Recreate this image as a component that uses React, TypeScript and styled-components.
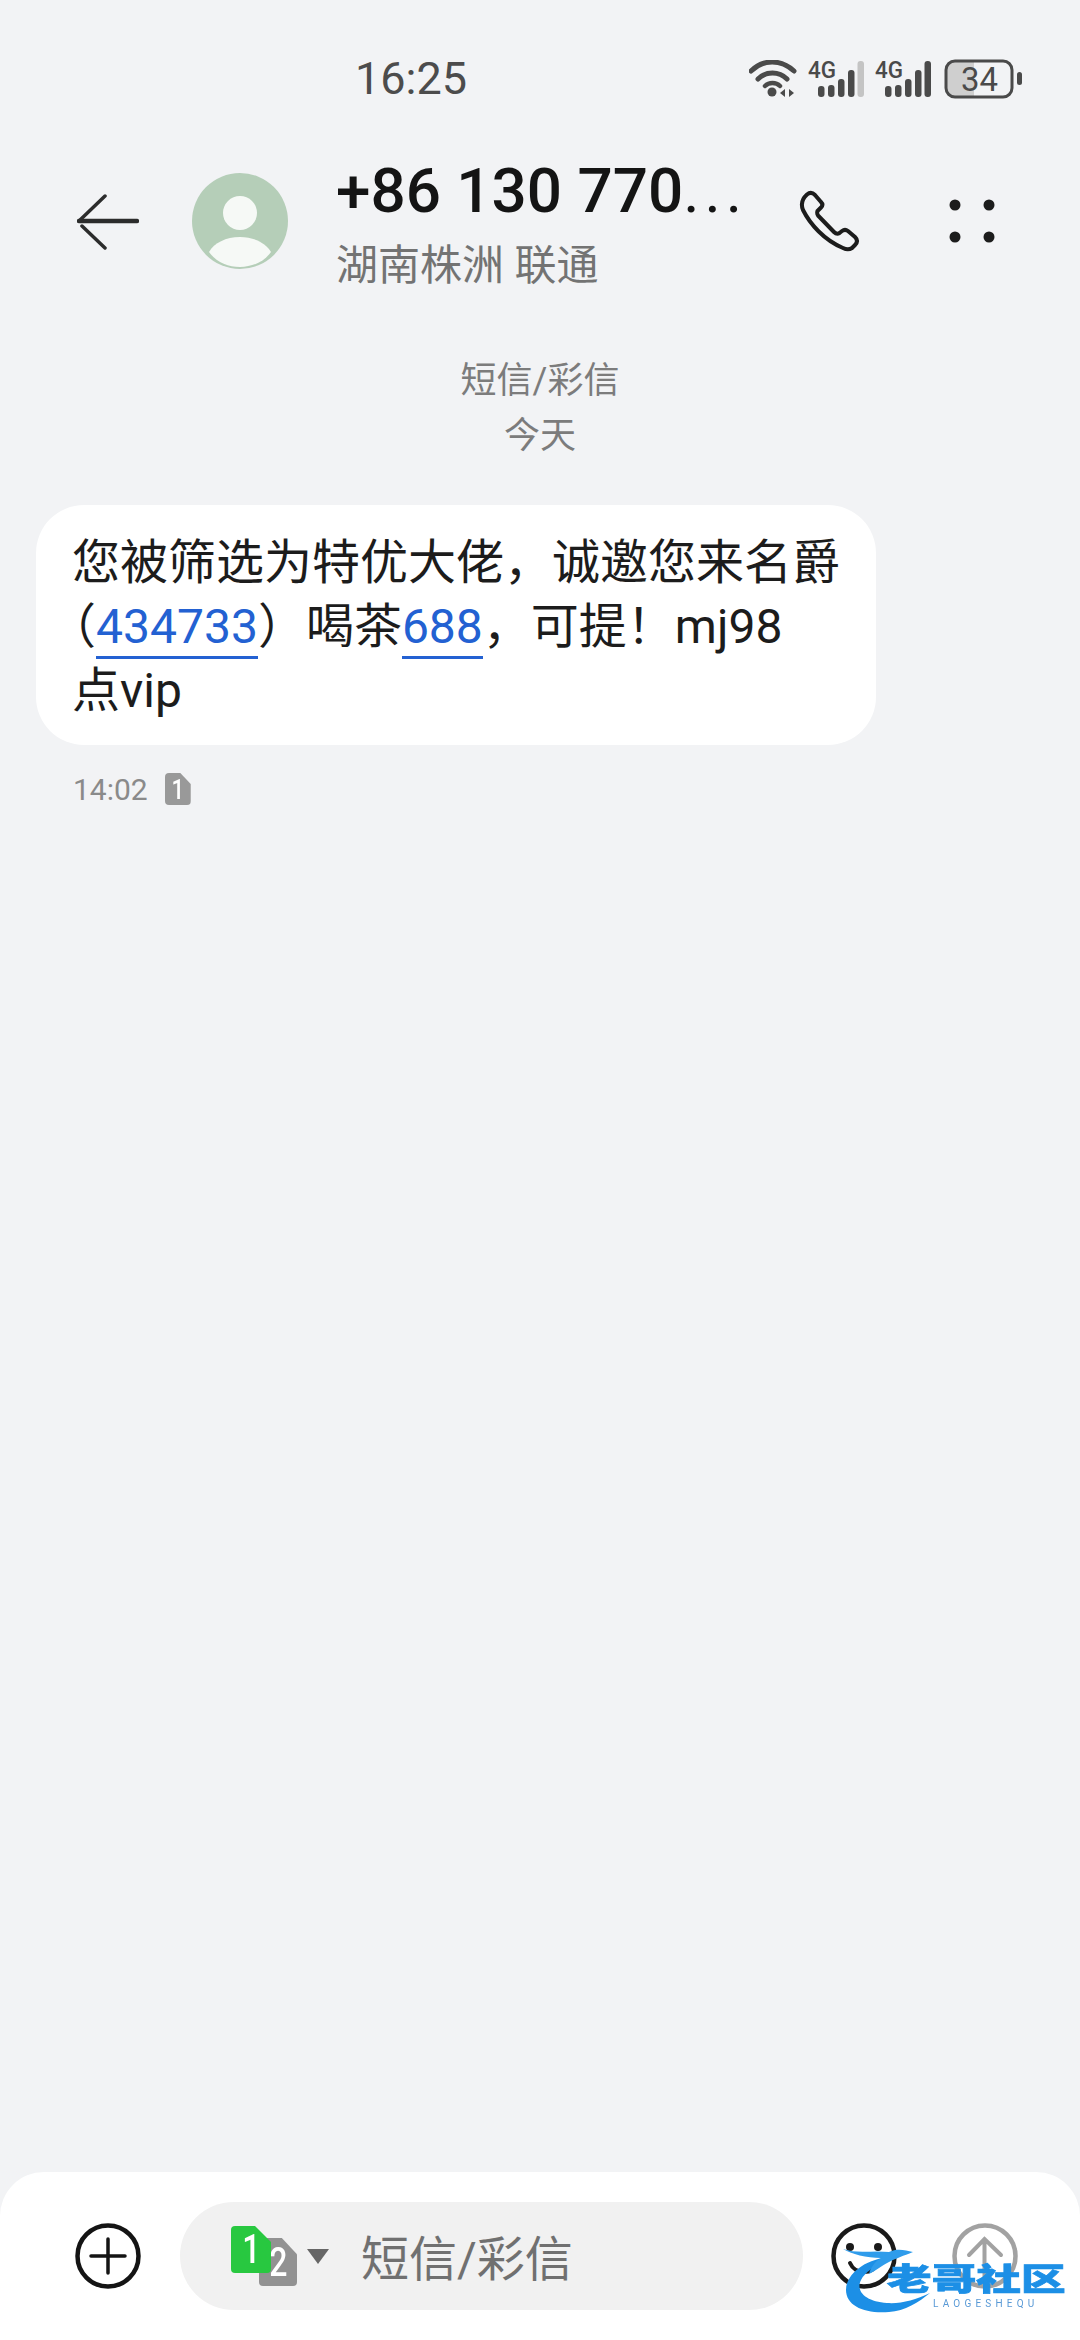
import styled, { createGlobalStyle } from "styled-components";

const GlobalStyle = createGlobalStyle`
  html, body {
    margin: 0;
    padding: 0;
    background: #f2f3f5;
  }
  * {
    box-sizing: border-box;
  }
`;

const FONT = `Roboto, "Noto Sans CJK SC", sans-serif`;

const S = {
  Page: styled.div`
    position: relative;
    width: 1080px;
    height: 2340px;
    display: flex;
    flex-direction: column;
    overflow: hidden;
    background: #f2f3f5;
    font-family: ${FONT};
  `,
  StatusBar: styled.div`
    height: 60px;
    margin-top: 49px;
    padding-left: 355px;
    display: flex;
    align-items: center;
    justify-content: space-between;
  `,
  Clock: styled.span`
    width: 112px;
    font-size: 45px;
    line-height: 60px;
    color: #4c4c4c;
  `,
  StatusIcons: styled.div`
    display: flex;
    align-items: center;
    margin-right: 58px;
    gap: 13px;
  `,
  SignalIcon: styled.svg`
    width: 56px;
    height: 56px;
    margin: -18px 0 0 -2px;
    flex: none;
  `,
  Header: styled.header`
    height: 96px;
    margin-top: 64px;
    padding-left: 77px;
    display: flex;
    align-items: center;
  `,
  BackIcon: styled.svg`
    width: 62px;
    height: 56px;
    margin-top: 2px;
    flex: none;
  `,
  AvatarIcon: styled.svg`
    width: 96px;
    height: 96px;
    margin-left: 53px;
    flex: none;
  `,
  TitleBlock: styled.div`
    width: 463px;
    margin-left: 48px;
    display: flex;
    flex-direction: column;
    flex: none;
  `,
  Title: styled.div`
    font-size: 62px;
    font-weight: 500;
    line-height: 70px;
    margin-top: 4px;
    color: #141414;
  `,
  Ellipsis: styled.span`
    letter-spacing: 5px;
    font-weight: 400;
  `,
  Subtitle: styled.div`
    font-size: 42px;
    line-height: 50px;
    margin-top: 15px;
    color: #737373;
  `,
  PhoneIcon: styled.svg`
    width: 62px;
    height: 62px;
    flex: none;
  `,
  MoreIcon: styled.svg`
    width: 48px;
    height: 46px;
    margin-left: 87px;
    flex: none;
  `,
  Notice: styled.div`
    margin-top: 85px;
    text-align: center;
    font-size: 36px;
    line-height: 55px;
    color: #7c7c7c;
  `,
  Bubble: styled.div`
    width: 840px;
    margin: 41px 0 0 36px;
    padding: 26px 36px 22px;
    background: #ffffff;
    border-radius: 48px;
    font-size: 48px;
    line-height: 64px;
    color: #1c1c1c;
    white-space: nowrap;
    text-spacing-trim: trim-start;
  `,
  Link: styled.span`
    color: #2361d2;
    border-bottom: 3px solid #2361d2;
    padding-bottom: 1px;
  `,
  MetaRow: styled.div`
    height: 36px;
    margin-top: 26px;
    padding-left: 73px;
    display: flex;
    align-items: center;
    gap: 17px;
  `,
  MetaTime: styled.span`
    margin-top: 2px;
    font-size: 30px;
    line-height: 36px;
    color: #8a8a8a;
  `,
  SimBadge: styled.span<{ $bg: string; $w: number; $h: number; $size: number }>`
    width: ${(p) => p.$w}px;
    height: ${(p) => p.$h}px;
    display: flex;
    align-items: center;
    justify-content: center;
    flex: none;
    background: ${(p) => p.$bg};
    color: #ffffff;
    font-size: ${(p) => p.$size}px;
    font-weight: 500;
    border-radius: 4px;
    clip-path: polygon(0 0, 60% 0, 100% 34%, 100% 100%, 0 100%);
  `,
  SimDigit: styled.span`
    display: block;
    transform: scaleX(0.8);
  `,
  Composer: styled.footer`
    height: 168px;
    margin-top: auto;
    padding-left: 75px;
    display: flex;
    align-items: center;
    background: #ffffff;
    border-radius: 44px 44px 0 0;
  `,
  RoundIcon: styled.svg<{ $gap?: number }>`
    width: 66px;
    height: 66px;
    flex: none;
    margin-left: ${(p) => p.$gap ?? 0}px;
  `,
  Input: styled.div`
    width: 623px;
    height: 108px;
    margin-left: 39px;
    padding-left: 51px;
    display: flex;
    align-items: center;
    flex: none;
    background: #f1f1f1;
    border-radius: 54px;
  `,
  SimStack: styled.div`
    position: relative;
    width: 66px;
    height: 60px;
    flex: none;
  `,
  SimFront: styled.div`
    position: absolute;
    left: 0;
    top: 0;
  `,
  SimBack: styled.div`
    position: absolute;
    left: 28px;
    top: 12px;
  `,
  Caret: styled.div`
    width: 0;
    height: 0;
    margin-left: 10px;
    border-left: 11px solid transparent;
    border-right: 11px solid transparent;
    border-top: 15px solid #666666;
    flex: none;
  `,
  Placeholder: styled.span`
    margin-left: 32px;
    margin-top: -3px;
    font-size: 48px;
    color: #707070;
  `,
  Watermark: styled.div`
    position: absolute;
    left: 843px;
    top: 2240px;
    width: 230px;
    height: 80px;
    filter: blur(0.6px);
  `,
  WatermarkSwirl: styled.svg`
    position: absolute;
    left: 0;
    top: 0;
    width: 150px;
    height: 76px;
  `,
  WatermarkName: styled.div`
    position: absolute;
    left: 44px;
    top: 22px;
    width: 44px;
    white-space: nowrap;
    font-size: 31px;
    line-height: 36px;
    font-weight: 900;
    color: #1c8fe6;
    -webkit-text-stroke: 0.7px #1c8fe6;
    transform-origin: left center;
    transform: scaleX(1.44);
  `,
  WatermarkSub: styled.div`
    position: absolute;
    left: 90px;
    top: 59px;
    white-space: nowrap;
    font-size: 10px;
    line-height: 10px;
    letter-spacing: 4.2px;
    color: #5a9ad6;
  `,
};

function Signal({ full }: { full: boolean }) {
  return (
    <S.SignalIcon viewBox="-2 -18 56 56">
      <text
        x="-2"
        y="18"
        fontFamily="Roboto, sans-serif"
        fontSize="24"
        fontWeight="500"
        fill="#4a4a4a"
        textLength="28"
        lengthAdjust="spacingAndGlyphs"
      >
        4G
      </text>
      <rect x="8" y="26" width="6.5" height="11" rx="3" fill="#4a4a4a" />
      <rect x="18" y="25" width="6.5" height="12" rx="3" fill="#4a4a4a" />
      <rect x="28" y="19" width="6.5" height="18" rx="3" fill="#4a4a4a" />
      <rect x="38" y="10" width="6.5" height="27" rx="3" fill="#4a4a4a" />
      <rect x="47.5" y="1" width="6.5" height="36" rx="3" fill={full ? "#4a4a4a" : "#c4c4c4"} />
    </S.SignalIcon>
  );
}

export default function App() {
  return (
    <S.Page>
      <GlobalStyle />
      <S.StatusBar>
        <S.Clock>16:25</S.Clock>
        <S.StatusIcons>
          <svg width="48" height="38" viewBox="0 0 48 38" fill="none" stroke="#4a4a4a" strokeLinecap="round">
            <path d="M2 11 C14 -1 32 -1 45 11" strokeWidth="5" />
            <path d="M9 19 C17 11 30 11 38 19" strokeWidth="5" />
            <path d="M16 26 C20 22 27 22 31 26" strokeWidth="4.5" />
            <circle cx="23" cy="32" r="4.5" fill="#4a4a4a" stroke="none" />
            <path d="M31 33 L36 29 V37 Z M40 29 L45 33 L40 37 Z" fill="#4a4a4a" stroke="none" />
          </svg>
          <Signal full={false} />
          <Signal full />
          <svg width="78" height="40" viewBox="0 0 78 40">
            <path d="M10 2 H30 V38 H10 A8 8 0 0 1 2 30 V10 A8 8 0 0 1 10 2 Z" fill="#cfcfcf" />
            <rect x="2" y="2" width="66" height="36" rx="9" fill="none" stroke="#4a4a4a" strokeWidth="3" />
            <text
              x="17"
              y="32"
              fontFamily="Roboto, sans-serif"
              fontSize="34"
              fill="#4a4a4a"
              textLength="37"
              lengthAdjust="spacingAndGlyphs"
            >
              34
            </text>
            <rect x="73" y="13" width="5" height="13" rx="2.5" fill="#4a4a4a" />
          </svg>
        </S.StatusIcons>
      </S.StatusBar>

      <S.Header>
        <S.BackIcon viewBox="0 0 62 56" fill="none" stroke="#2c2c2c" strokeLinecap="round">
          <path d="M2 27 H60" strokeWidth="4.5" />
          <path d="M2 27 L28 2" strokeWidth="3.5" />
          <path d="M5 32 L28 54" strokeWidth="3.5" />
        </S.BackIcon>
        <S.AvatarIcon viewBox="0 0 96 96">
          <circle cx="48" cy="48" r="48" fill="#b5ceb8" />
          <circle cx="48" cy="40" r="17" fill="#f6f9f6" />
          <path d="M17 79 C22 70 34 64 48 64 C62 64 74 70 79 79 C72 89 60 94 48 94 C36 94 24 89 17 79 Z" fill="#f6f9f6" />
        </S.AvatarIcon>
        <S.TitleBlock>
          <S.Title>
            +86 130 770<S.Ellipsis>...</S.Ellipsis>
          </S.Title>
          <S.Subtitle>湖南株洲 联通</S.Subtitle>
        </S.TitleBlock>
        <S.PhoneIcon viewBox="-1 -1 62 62" fill="none" stroke="#1c1c1c" strokeWidth="4" strokeLinejoin="round">
          <path d="M7 3.5 C10 1 13 2 15 4 L21 11 C23 13 22.5 15 21 16.5 L17.5 20 C17 21.5 17 23 18 24.5 L34 41 C36 43 38 43 39.5 42 L42 40 C44 38.5 46 38.5 48 40 L55 46 C58 49 57.5 51.5 55 54 L52 57 C49 59 46 58.5 43 57 C24 49 10 33 3 19 C1 14 2 8 7 3.5 Z" />
        </S.PhoneIcon>
        <S.MoreIcon viewBox="0 0 48 46" fill="#1c1c1c">
          <circle cx="7" cy="7" r="5.5" />
          <circle cx="41" cy="7" r="5.5" />
          <circle cx="7" cy="39" r="5.5" />
          <circle cx="41" cy="39" r="5.5" />
        </S.MoreIcon>
      </S.Header>

      <S.Notice>
        短信/彩信
        <br />
        今天
      </S.Notice>

      <S.Bubble>
        您被筛选为特优大佬，诚邀您来名爵
        <br />（<S.Link>434733</S.Link>）喝茶<S.Link>688</S.Link>，可提！mj98
        <br />
        点vip
      </S.Bubble>

      <S.MetaRow>
        <S.MetaTime>14:02</S.MetaTime>
        <S.SimBadge $bg="#999999" $w={26} $h={32} $size={28}>
          <S.SimDigit>1</S.SimDigit>
        </S.SimBadge>
      </S.MetaRow>

      <S.Composer>
        <S.RoundIcon viewBox="0 0 66 66" fill="none" stroke="#141414" strokeLinecap="round">
          <circle cx="33" cy="33" r="30.5" strokeWidth="4.5" />
          <path d="M16 33 H50 M33 16 V50" strokeWidth="3.5" />
        </S.RoundIcon>
        <S.Input>
          <S.SimStack>
            <S.SimBack>
              <S.SimBadge $bg="#929292" $w={38} $h={48} $size={40}>
                <S.SimDigit>2</S.SimDigit>
              </S.SimBadge>
            </S.SimBack>
            <S.SimFront>
              <S.SimBadge $bg="#28c840" $w={40} $h={47} $size={40}>
                <S.SimDigit>1</S.SimDigit>
              </S.SimBadge>
            </S.SimFront>
          </S.SimStack>
          <S.Caret />
          <S.Placeholder>短信/彩信</S.Placeholder>
        </S.Input>
        <S.RoundIcon $gap={28} viewBox="0 0 66 66" fill="none" stroke="#1a1a1a" strokeLinecap="round">
          <circle cx="33" cy="33" r="30.5" strokeWidth="4.5" />
          <circle cx="19" cy="24" r="4" fill="#1a1a1a" stroke="none" />
          <circle cx="47" cy="24" r="4" fill="#1a1a1a" stroke="none" />
          <path d="M19 40 C24 52 42 52 47 40" strokeWidth="4" />
        </S.RoundIcon>
        <S.RoundIcon $gap={55} viewBox="0 0 66 66" fill="none" stroke="#a2a2a2" strokeLinecap="round">
          <circle cx="33" cy="33" r="30.5" strokeWidth="4.5" />
          <path d="M32.5 16 V62 M17 32 L32.5 16 L49 32" strokeWidth="4" />
        </S.RoundIcon>
      </S.Composer>

      <S.Watermark>
        <S.WatermarkSwirl viewBox="0 0 150 76" fill="none">
          <path d="M40 18 C18 22 3 36 3 50 C3 66 22 74 46 72 C62 71 76 62 87 53 C72 60 58 64 44 63 C24 62 12 52 18 40 C22 32 32 26 42 22 Z" fill="#1c8fe6" />
          <path d="M0 9 C14 14 30 10 46 12 C54 8 62 10 70 12 C60 16 54 18 46 22 C38 26 34 30 26 34 C28 26 34 20 38 18 C24 18 8 14 0 9 Z" fill="#2f9ceb" />
        </S.WatermarkSwirl>
        <S.WatermarkName>老哥社区</S.WatermarkName>
        <S.WatermarkSub>LAOGESHEQU</S.WatermarkSub>
      </S.Watermark>
    </S.Page>
  );
}
